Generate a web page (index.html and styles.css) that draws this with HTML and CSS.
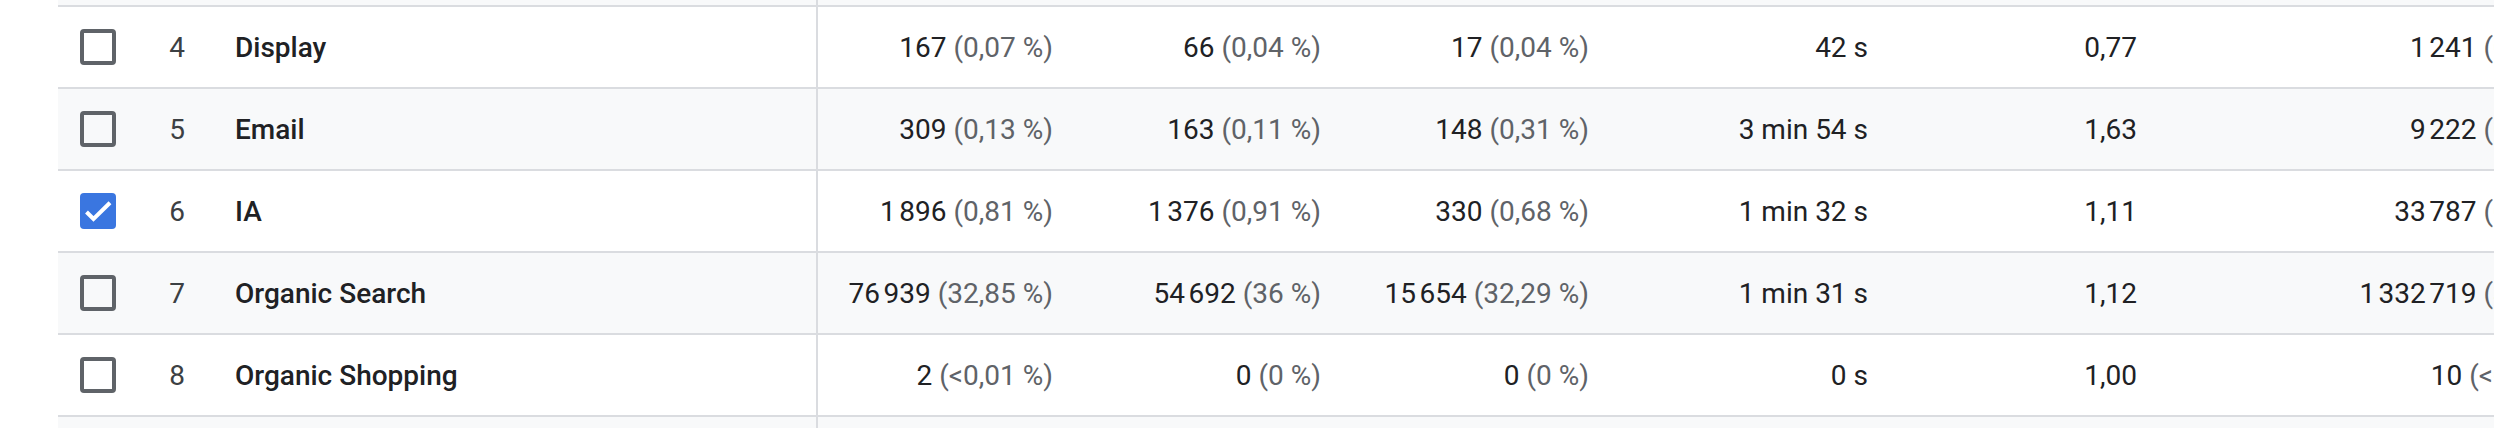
FILE: index.html
```html
<!DOCTYPE html>
<html lang="fr">
<head>
<meta charset="utf-8">
<link rel="stylesheet" href="styles.css">
</head>
<body>
<div class="page">
  <div class="table">
    <div class="row row-alt row-stub">
      <div class="c-chk"></div><div class="c-idx"></div><div class="c-dim"></div>
      <div class="c-m"></div><div class="c-m"></div><div class="c-m"></div><div class="c-m c-m4"></div><div class="c-m"></div><div class="c-m c-m6"></div>
    </div>
    <div class="row">
      <div class="c-chk"><span class="box"></span></div>
      <div class="c-idx">4</div>
      <div class="c-dim">Display</div>
      <div class="c-m">167 <span class="pct">(0,07&nbsp;%)</span></div>
      <div class="c-m">66 <span class="pct">(0,04&nbsp;%)</span></div>
      <div class="c-m">17 <span class="pct">(0,04&nbsp;%)</span></div>
      <div class="c-m c-m4">42&nbsp;s</div>
      <div class="c-m">0,77</div>
      <div class="c-m c-m6">1&#8239;241 <span class="pct">(0,03&nbsp;%)</span></div>
    </div>
    <div class="row row-alt">
      <div class="c-chk"><span class="box"></span></div>
      <div class="c-idx">5</div>
      <div class="c-dim">Email</div>
      <div class="c-m">309 <span class="pct">(0,13&nbsp;%)</span></div>
      <div class="c-m">163 <span class="pct">(0,11&nbsp;%)</span></div>
      <div class="c-m">148 <span class="pct">(0,31&nbsp;%)</span></div>
      <div class="c-m c-m4">3&nbsp;min 54&nbsp;s</div>
      <div class="c-m">1,63</div>
      <div class="c-m c-m6">9&#8239;222 <span class="pct">(0,23&nbsp;%)</span></div>
    </div>
    <div class="row">
      <div class="c-chk"><span class="box box-on"><svg viewBox="0 0 36 36" width="36" height="36"><polyline points="6.5,19 13.5,26 30,9.8" fill="none" stroke="#fff" stroke-width="4"/></svg></span></div>
      <div class="c-idx">6</div>
      <div class="c-dim">IA</div>
      <div class="c-m">1&#8239;896 <span class="pct">(0,81&nbsp;%)</span></div>
      <div class="c-m">1&#8239;376 <span class="pct">(0,91&nbsp;%)</span></div>
      <div class="c-m">330 <span class="pct">(0,68&nbsp;%)</span></div>
      <div class="c-m c-m4">1&nbsp;min 32&nbsp;s</div>
      <div class="c-m">1,11</div>
      <div class="c-m c-m6">33&#8239;787 <span class="pct">(0,83&nbsp;%)</span></div>
    </div>
    <div class="row row-alt">
      <div class="c-chk"><span class="box"></span></div>
      <div class="c-idx">7</div>
      <div class="c-dim">Organic Search</div>
      <div class="c-m">76&#8239;939 <span class="pct">(32,85&nbsp;%)</span></div>
      <div class="c-m">54&#8239;692 <span class="pct">(36&nbsp;%)</span></div>
      <div class="c-m">15&#8239;654 <span class="pct">(32,29&nbsp;%)</span></div>
      <div class="c-m c-m4">1&nbsp;min 31&nbsp;s</div>
      <div class="c-m">1,12</div>
      <div class="c-m c-m6">1&#8239;332&#8239;719 <span class="pct">(32,9&nbsp;%)</span></div>
    </div>
    <div class="row">
      <div class="c-chk"><span class="box"></span></div>
      <div class="c-idx">8</div>
      <div class="c-dim">Organic Shopping</div>
      <div class="c-m">2 <span class="pct">(&lt;0,01&nbsp;%)</span></div>
      <div class="c-m">0 <span class="pct">(0&nbsp;%)</span></div>
      <div class="c-m">0 <span class="pct">(0&nbsp;%)</span></div>
      <div class="c-m c-m4">0&nbsp;s</div>
      <div class="c-m">1,00</div>
      <div class="c-m c-m6">10 <span class="pct">(&lt;0,01&nbsp;%)</span></div>
    </div>
    <div class="row row-alt row-tail">
      <div class="c-chk"></div><div class="c-idx"></div><div class="c-dim"></div>
      <div class="c-m"></div><div class="c-m"></div><div class="c-m"></div><div class="c-m c-m4"></div><div class="c-m"></div><div class="c-m c-m6"></div>
    </div>
  </div>
</div>
</body>
</html>
```

FILE: styles.css
```css
html, body {
  margin: 0;
  padding: 0;
  background: #ffffff;
}
body {
  font-family: Roboto, "Liberation Sans", Arial, sans-serif;
  font-size: 28px;
  color: #202124;
}
.page {
  padding-left: 58px;
  height: 428px;
  overflow: hidden;
}
.table {
  width: 2436px;
  overflow: hidden;
}
.row {
  display: grid;
  grid-template-columns: 72px 75px 613px 267px 268px 268px 279px 269px 446px;
  height: 80px;
  border-bottom: 2px solid #dadce0;
  background: #ffffff;
  white-space: nowrap;
}
.row-alt {
  background: #f8f9fa;
}
.row-stub {
  height: 5px;
}
.row-tail {
  height: 11px;
  border-bottom: 0;
}
.row > div {
  display: flex;
  align-items: center;
  overflow: visible;
}
.c-chk {
  padding-left: 22px;
}
.c-idx {
  justify-content: flex-end;
  padding-right: 20px;
  color: #3c4043;
}
.c-dim {
  padding-left: 30px;
  font-weight: 500;
  color: #202124;
  border-right: 2px solid #dadce0;
}
.c-m {
  justify-content: flex-end;
  padding-right: 32px;
  color: #202124;
}
.pct {
  color: #5f6368;
  margin-left: 7px;
}
.box {
  display: block;
  box-sizing: border-box;
  width: 36px;
  height: 36px;
  border: 4px solid #5f6368;
  border-radius: 4px;
}
.box-on {
  border: 0;
  background: #3a76e0;
}
.box-on svg {
  display: block;
}
```
